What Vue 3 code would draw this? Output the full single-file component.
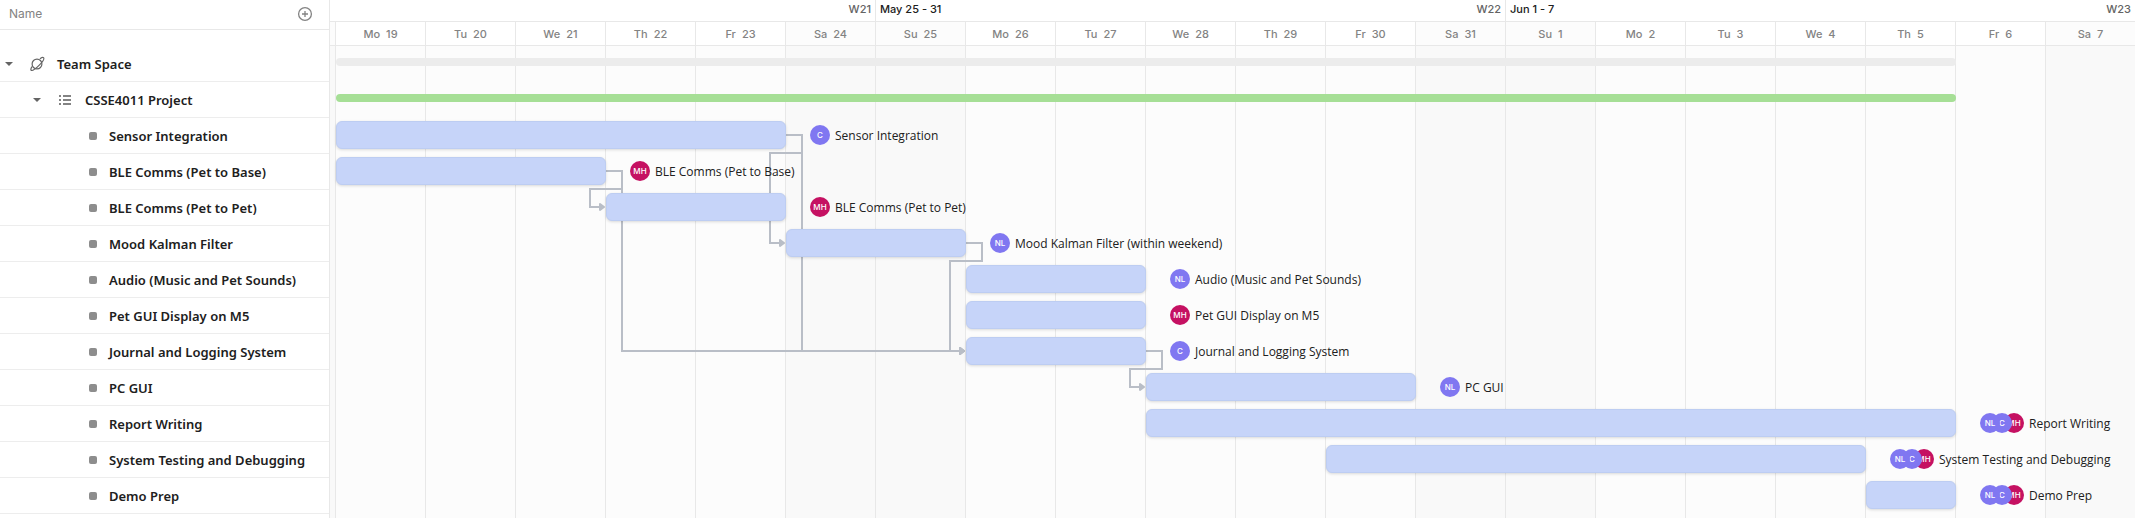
<script setup>
import { ref, computed } from 'vue'

const DAY = 90
const ROW = 36

const people = {
  NL: { initials: 'NL', tone: 'violet' },
  C: { initials: 'C', tone: 'violet' },
  MH: { initials: 'MH', tone: 'crimson' }
}

const tasks = [
  { name: 'Sensor Integration', start: 0, days: 5, who: ['C'] },
  { name: 'BLE Comms (Pet to Base)', start: 0, days: 3, who: ['MH'] },
  { name: 'BLE Comms (Pet to Pet)', start: 3, days: 2, who: ['MH'] },
  { name: 'Mood Kalman Filter', label: 'Mood Kalman Filter (within weekend)', start: 5, days: 2, who: ['NL'] },
  { name: 'Audio (Music and Pet Sounds)', start: 7, days: 2, who: ['NL'] },
  { name: 'Pet GUI Display on M5', start: 7, days: 2, who: ['MH'] },
  { name: 'Journal and Logging System', start: 7, days: 2, who: ['C'] },
  { name: 'PC GUI', start: 9, days: 3, who: ['NL'] },
  { name: 'Report Writing', start: 9, days: 9, who: ['NL', 'C', 'MH'] },
  { name: 'System Testing and Debugging', start: 11, days: 6, who: ['NL', 'C', 'MH'] },
  { name: 'Demo Prep', start: 17, days: 1, who: ['NL', 'C', 'MH'] }
]

const links = [[0, 3], [0, 6], [1, 2], [1, 6], [3, 6], [6, 7]]

const names = ['Mo', 'Tu', 'We', 'Th', 'Fr', 'Sa', 'Su']
const days = Array.from({ length: 20 }, (_, i) => ({
  name: names[i % 7],
  date: i < 13 ? 19 + i : i - 12,
  weekend: i % 7 > 4
}))

const weeks = [
  { range: '', number: 'W21', days: 6 },
  { range: 'May 25 - 31', number: 'W22', days: 7 },
  { range: 'Jun 1 - 7', number: 'W23', days: 7 }
]

const spaceOpen = ref(true)
const projectOpen = ref(true)
const showTasks = computed(() => spaceOpen.value && projectOpen.value)

const mid = (row) => (row + 2) * ROW + 17

const routes = links.map(([from, to]) => {
  const x1 = (tasks[from].start + tasks[from].days) * DAY
  const y1 = mid(from)
  const x2 = tasks[to].start * DAY
  const y2 = mid(to)
  const line = x2 - x1 > 32
    ? `M${x1} ${y1}h16V${y2}H${x2 - 4}`
    : `M${x1} ${y1}h16v18H${x2 - 16}V${y2}H${x2 - 4}`
  return { line, head: `M${x2 - 6} ${y2 - 3}l4 3l-4 3z` }
})

const span = (t) => ({ left: t.start * DAY + 'px', width: t.days * DAY + 'px' })
</script>

<template>
  <main class="gantt">
    <aside class="sidebar">
      <header class="name-head">
        <span>Name</span>
        <button class="add" type="button" aria-label="Add column">
          <svg width="16" height="16" viewBox="0 0 16 16" fill="none" stroke="currentColor" stroke-width="1.3">
            <circle cx="8" cy="8" r="6.400" />
            <path d="M8 5v6M5 8h6" />
          </svg>
        </button>
      </header>
      <div class="tree">
        <div class="row space">
          <button class="caret" type="button" aria-label="Toggle Team Space" @click="spaceOpen = !spaceOpen">
            <svg width="8" height="4" viewBox="0 0 8 4"><path d="M0 0h8L4 4z" fill="currentColor" /></svg>
          </button>
          <svg class="planet" width="16" height="16" viewBox="0 0 16 16" fill="none" stroke="currentColor" stroke-width="1.2" stroke-linecap="round">
            <circle cx="8" cy="8" r="4.9" />
            <path d="M11.3 2.5c1.5-1 2.7-1.3 3.2-.8 1 1-.9 4.200-4.200 7.500s-6.500 5.900-7.900 5.200c-.9-.5-.6-1.900.5-3.600" />
          </svg>
          <span>Team Space</span>
        </div>
        <div v-if="spaceOpen" class="row project">
          <button class="caret" type="button" aria-label="Toggle CSSE4011 Project" @click="projectOpen = !projectOpen">
            <svg width="8" height="4" viewBox="0 0 8 4"><path d="M0 0h8L4 4z" fill="currentColor" /></svg>
          </button>
          <svg class="list" width="12" height="12" viewBox="0 0 12 12" fill="currentColor">
            <path d="M0 1h2v2H0zM0 5h2v2H0zM0 9h2v2H0zM4 1h8v2H4zM4 5h8v2H4zM4 9h8v2H4z" />
          </svg>
          <span>CSSE4011 Project</span>
        </div>
        <template v-if="showTasks">
          <div v-for="t in tasks" :key="t.name" class="row task">
            <i class="status"></i>
            <span>{{ t.name }}</span>
          </div>
        </template>
      </div>
    </aside>

    <section class="timeline">
      <div class="gutter"><i class="gutter-week"></i><i class="gutter-day"></i></div>
      <div class="calendar">
        <div class="weeks">
          <div v-for="w in weeks" :key="w.number" class="week" :style="{ width: w.days * DAY + 'px' }">
            <strong>{{ w.range }}</strong>
            <span>{{ w.number }}</span>
          </div>
        </div>
        <div class="days">
          <div v-for="d in days" :key="d.name + d.date" class="day" :class="{ weekend: d.weekend }">
            <span>{{ d.name }}</span><span>{{ d.date }}</span>
          </div>
        </div>
        <div class="canvas">
          <div class="columns">
            <i v-for="d in days" :key="d.name + d.date" :class="{ weekend: d.weekend }"></i>
          </div>
          <svg v-if="showTasks" class="links" width="1800" height="472">
            <g v-for="(r, i) in routes" :key="i">
              <path :d="r.line" fill="none" stroke="#b9bec7" stroke-width="2" />
              <path :d="r.head" fill="#b9bec7" stroke="#b9bec7" stroke-width="2" stroke-linejoin="round" />
            </g>
          </svg>
          <div class="lane"><i class="rollup grey" :style="span({ start: 0, days: 18 })"></i></div>
          <div class="lane"><i class="rollup green" :style="span({ start: 0, days: 18 })"></i></div>
          <template v-if="showTasks">
            <div v-for="t in tasks" :key="t.name" class="lane">
              <div class="item" :style="{ left: t.start * DAY + 'px' }">
                <i class="bar" :style="{ width: t.days * DAY + 'px' }"></i>
                <span class="people">
                  <b
                    v-for="(p, i) in t.who"
                    :key="p"
                    class="avatar"
                    :class="people[p].tone"
                    :style="{ zIndex: t.who.length - i }"
                  >{{ people[p].initials }}</b>
                </span>
                <span class="label">{{ t.label || t.name }}</span>
              </div>
            </div>
          </template>
        </div>
      </div>
    </section>
  </main>
</template>

<style>
html,
body {
  background: #fff;
  overflow: hidden;
}
</style>

<style scoped>
.gantt {
  display: flex;
  height: 100vh;
  overflow: hidden;
  font-family: "Open Sans", "Noto Sans", sans-serif;
  color: #202020;
}
button {
  padding: 0;
  border: 0;
  background: none;
  display: flex;
  align-items: center;
  justify-content: center;
  cursor: pointer;
}
.sidebar {
  flex: 0 0 330px;
  box-sizing: border-box;
  border-right: 1px solid #e8e8e8;
}
.name-head {
  display: flex;
  align-items: center;
  justify-content: space-between;
  box-sizing: border-box;
  height: 30px;
  padding: 0 16px 2px 9px;
  border-bottom: 1px solid #e8e8e8;
  font: 400 12px "Inter", sans-serif;
  color: #838383;
}
.add {
  color: #838383;
}
.tree {
  padding-top: 16px;
}
.row {
  display: flex;
  align-items: center;
  box-sizing: border-box;
  height: 36px;
  border-bottom: 1px solid #ededed;
  font-family: "Noto Sans", "Open Sans", sans-serif;
  font-size: 13px;
  font-weight: 600;
  white-space: nowrap;
}
.space {
  padding-left: 5px;
}
.project {
  padding-left: 33px;
}
.task {
  padding-left: 89px;
}
.caret {
  width: 8px;
  height: 16px;
  color: #646464;
}
.planet {
  margin: 0 12px 0 16px;
  color: #646464;
}
.list {
  margin: 0 14px 0 18px;
  color: #838383;
}
.status {
  width: 8px;
  height: 8px;
  margin-right: 12px;
  border-radius: 2px;
  background: #8d8d8d;
}
.timeline {
  flex: 1;
  display: flex;
  min-width: 0;
  overflow: hidden;
  background: #fcfcfc;
}
.gutter {
  flex: 0 0 6px;
  display: flex;
  flex-direction: column;
  background: #f9f9f9;
}
.gutter i {
  box-sizing: border-box;
  border-bottom: 1px solid #e8e8e8;
}
.gutter .gutter-week {
  height: 22px;
  background: #fff;
}
.gutter .gutter-day {
  height: 24px;
  border-right: 1px solid #e8e8e8;
  background: #fcfcfc;
}
.gutter::after {
  content: "";
  flex: 1;
  border-right: 1px solid #e8e8e8;
}
.calendar {
  flex: 0 0 auto;
  display: flex;
  flex-direction: column;
}
.weeks,
.days {
  display: flex;
  box-sizing: border-box;
  border-bottom: 1px solid #e8e8e8;
  background: #fff;
  font-family: "Inter", sans-serif;
  font-size: 11px;
  font-weight: 500;
}
.weeks {
  height: 22px;
}
.week {
  display: flex;
  align-items: center;
  justify-content: space-between;
  box-sizing: border-box;
  padding: 0 4px 4px 4px;
  border-right: 1px solid #e8e8e8;
  color: #646464;
}
.week strong {
  font-weight: 500;
  color: #202020;
}
.days {
  height: 24px;
}
.day {
  display: flex;
  align-items: center;
  justify-content: center;
  gap: 6px;
  box-sizing: border-box;
  width: 90px;
  border-right: 1px solid #e8e8e8;
  color: #838383;
}
.day.weekend {
  background: #fcfcfc;
}
.canvas {
  position: relative;
  flex: 1;
}
.columns {
  position: absolute;
  inset: 0;
  display: flex;
}
.columns i {
  box-sizing: border-box;
  width: 90px;
  border-right: 1px solid #e8e8e8;
}
.columns .weekend {
  background: #f9f9f9;
}
.links {
  position: absolute;
  left: 0;
  top: 0;
}
.lane {
  position: relative;
  height: 36px;
}
.rollup {
  position: absolute;
  top: 12px;
  height: 8px;
  border-radius: 4px;
}
.grey {
  background: #ececec;
}
.green {
  background: #a6df96;
}
.item {
  position: absolute;
  top: 3px;
  display: flex;
  align-items: center;
  height: 28px;
  white-space: nowrap;
}
.bar {
  box-sizing: border-box;
  height: 28px;
  border: 1px solid #bdcdf2;
  border-radius: 6px;
  background: #c6d4f9;
  box-shadow: 0 1px 3px rgba(0, 0, 0, 0.14);
}
.people {
  display: flex;
  margin: 0 5px 0 24px;
}
.avatar {
  display: flex;
  align-items: center;
  justify-content: center;
  width: 20px;
  height: 20px;
  border-radius: 50%;
  font: 500 8px "Inter", sans-serif;
  color: #fff;
}
.avatar + .avatar {
  margin-left: -8px;
}
.violet {
  background: #8077f1;
}
.crimson {
  background: #c51162;
}
.label {
  padding-top: 1px;
  font-size: 12px;
  font-weight: 500;
  color: #202020;
}
</style>
